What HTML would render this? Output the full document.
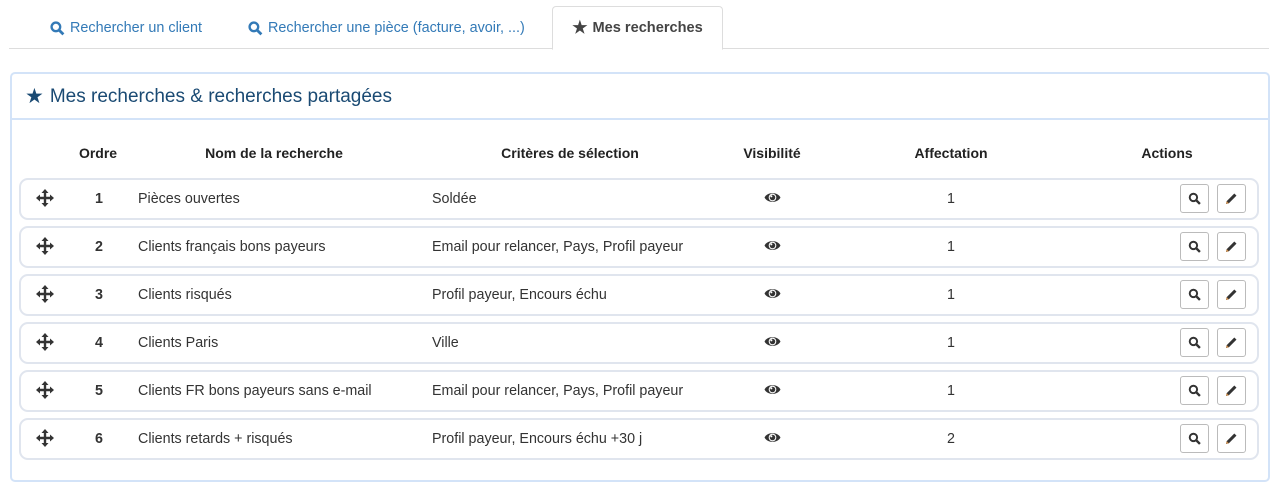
<!DOCTYPE html>
<html><head><meta charset="utf-8"><style>
body{margin:0;background:#fff;font-family:"Liberation Sans",sans-serif;font-size:14px;color:#333;width:1279px;height:490px;position:relative;overflow:hidden}
.abs{position:absolute}
.tabline{left:9px;right:10px;top:48px;height:1px;background:#ddd}
.tab{top:20px;color:#337ab7;font-size:14.4px;display:flex;align-items:center;gap:5px}
.active{left:552px;top:6px;width:169px;height:42px;border:1px solid #ddd;border-bottom:1px solid #fff;border-radius:4px 4px 0 0;background:#fff;font-weight:bold;font-size:14.6px;color:#444;display:flex;align-items:center;justify-content:center;gap:5px}
.panel{left:10px;top:72px;width:1256px;height:406px;border:2px solid #d3e3f8;border-radius:5px}
.ph{left:10px;top:72px;width:1258px;height:46px;border-bottom:2px solid #d3e3f8}
.ph span{position:absolute;left:15px;top:12px;font-size:19px;color:#1a4a73;display:flex;align-items:center;gap:6px}
.th{top:145px;font-weight:bold;color:#222;transform:translateX(-50%)}
.row{left:19px;width:1236px;height:38px;border:2px solid #e0e5ee;border-radius:9px;font-size:14.3px}
.c{position:absolute;top:11px}
.btn{position:absolute;top:4px;width:29px;height:29px;border:1px solid #bbb;border-radius:3px;box-sizing:border-box;display:flex;align-items:center;justify-content:center}
</style></head><body>
<div class="abs tabline"></div>
<div class="abs tab" style="left:50px"><svg width="15" height="15" viewBox="0 0 14 14"><circle cx="5.5" cy="5.5" r="4" fill="none" stroke="#337ab7" stroke-width="2.2"/><path d="M8.5 8.5L12.5 12.5" stroke="#337ab7" stroke-width="2.6"/></svg>Rechercher un client</div>
<div class="abs tab" style="left:248px"><svg width="15" height="15" viewBox="0 0 14 14"><circle cx="5.5" cy="5.5" r="4" fill="none" stroke="#337ab7" stroke-width="2.2"/><path d="M8.5 8.5L12.5 12.5" stroke="#337ab7" stroke-width="2.6"/></svg>Rechercher une pièce (facture, avoir, ...)</div>
<div class="abs active"><span style="font-size:17px">★</span>Mes recherches</div>
<div class="abs panel"></div>
<div class="abs ph"><span><span style="position:static;font-size:21px">★</span>Mes recherches &amp; recherches partagées</span></div>
<div class="abs th" style="left:98px">Ordre</div>
<div class="abs th" style="left:274px">Nom de la recherche</div>
<div class="abs th" style="left:570px">Critères de sélection</div>
<div class="abs th" style="left:772px">Visibilité</div>
<div class="abs th" style="left:951px">Affectation</div>
<div class="abs th" style="left:1167px">Actions</div>
<div id="rows"></div>
<script>
var d=[["1","Pièces ouvertes","Soldée","1"],["2","Clients français bons payeurs","Email pour relancer, Pays, Profil payeur","1"],["3","Clients risqués","Profil payeur, Encours échu","1"],["4","Clients Paris","Ville","1"],["5","Clients FR bons payeurs sans e-mail","Email pour relancer, Pays, Profil payeur","1"],["6","Clients retards + risqués","Profil payeur, Encours échu +30 j","2"]];
var h="";
var mv='<svg width="18" height="18" viewBox="0 0 18 18" fill="#333"><path d="M9 0L12.5 4H10.2V7.8H14V5.5L18 9L14 12.5V10.2H10.2V14H12.5L9 18L5.5 14H7.8V10.2H4V12.5L0 9L4 5.5V7.8H7.8V4H5.5Z"/></svg>';
var eye='<svg width="17" height="13" viewBox="0 0 16 12"><path d="M0.5 6C3 0.5 13 0.5 15.5 6C13 11.5 3 11.5 0.5 6Z" fill="#333"/><circle cx="8" cy="6" r="3.6" fill="#fff"/><circle cx="8" cy="6" r="2.6" fill="#333"/><circle cx="6.9" cy="4.9" r="1" fill="#fff"/></svg>';
var sr='<svg width="13" height="13" viewBox="0 0 12 12"><circle cx="5" cy="5" r="3.4" fill="none" stroke="#333" stroke-width="1.8"/><path d="M7.5 7.5L11 11" stroke="#333" stroke-width="2.2"/></svg>';
var pen='<svg width="13" height="13" viewBox="0 0 12 12"><path d="M1 11L1.6 8.4L8.6 1.4L10.6 3.4L3.6 10.4Z" fill="#333"/><path d="M1 11L1.6 8.4L3.6 10.4Z" fill="#c8823a"/></svg>';
d.forEach(function(r,i){var t=178+48*i;
h+='<div class="abs row" style="top:'+t+'px">'+
'<div class="c" style="left:15px;top:9px">'+mv+'</div>'+
'<div class="c" style="left:74px;font-weight:bold">'+r[0]+'</div>'+
'<div class="c" style="left:117px">'+r[1]+'</div>'+
'<div class="c" style="left:411px">'+r[2]+'</div>'+
'<div class="c" style="left:743px;top:11px">'+eye+'</div>'+
'<div class="c" style="left:926px">'+r[3]+'</div>'+
'<div class="btn" style="left:1159px">'+sr+'</div>'+
'<div class="btn" style="left:1196px">'+pen+'</div></div>';});
document.getElementById("rows").innerHTML=h;
</script>
</body></html>
